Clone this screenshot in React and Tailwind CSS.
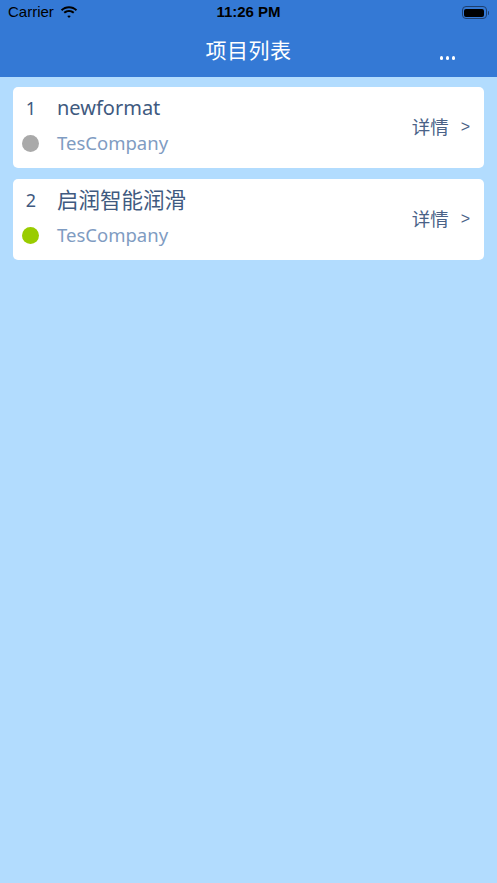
const projects = [
  { id: 1, name: 'newformat', company: 'TesCompany', dot: 'bg-[#a9a9a9]', size: 'text-[20px]' },
  { id: 2, name: '启润智能润滑', company: 'TesCompany', dot: 'bg-[#99cc00]', size: 'text-[21.5px]' },
]

const font = "font-['Noto_Sans','Noto_Sans_CJK_SC',sans-serif]"

const Wifi = () => (
  <svg width="18" height="13" viewBox="0 0 18 13" className="ml-[6px]">
    <path d="M9 2.2c2.6 0 5 1 6.8 2.7l1.3-1.4C14.9 1.4 12.1.2 9 .2S3.1 1.4.9 3.5l1.3 1.4C4 3.2 6.4 2.2 9 2.2z" fill="#000" />
    <path d="M9 5.9c1.6 0 3 .6 4.1 1.6l1.3-1.4C13 4.8 11.1 3.9 9 3.9S5 4.8 3.6 6.1l1.3 1.4C6 6.5 7.4 5.9 9 5.9z" fill="#000" />
    <path d="M9 9.4c.7 0 1.3.3 1.8.7L9 12 7.2 10.1c.5-.4 1.1-.7 1.8-.7z" fill="#000" />
  </svg>
)

const StatusBar = () => (
  <div className="relative h-[25px] flex items-center px-2 text-[15px] text-black font-['Liberation_Sans',sans-serif]">
    <span>Carrier</span>
    <Wifi />
    <span className="absolute left-1/2 -translate-x-1/2 font-bold">11:26 PM</span>
    <div className="ml-auto flex items-center">
      <div className="w-[25px] h-[13px] rounded-[4px] border border-[#1e3f6e] p-[1.5px]">
        <div className="w-full h-full rounded-[2px] bg-black" />
      </div>
      <div className="w-[1.5px] h-[4px] bg-[#1e3f6e] ml-[1px] rounded-r-sm" />
    </div>
  </div>
)

const App = () => {
  return (
    <div className={`min-h-[883px] bg-[#b2dcfe] ${font}`}>
      {/* Header */}
      <div className="bg-[#3479d5]">
        <StatusBar />
        <div className="relative h-[52px] flex items-center justify-center">
          <h1 className="text-white text-[21px] tracking-[0.5px]">项目列表</h1>
          <div className="absolute right-[42px] top-[31px] flex gap-[2.5px]">
            <span className="w-[3.5px] h-[3.5px] rounded-full bg-white" />
            <span className="w-[3.5px] h-[3.5px] rounded-full bg-white" />
            <span className="w-[3.5px] h-[3.5px] rounded-full bg-white" />
          </div>
        </div>
      </div>

      {/* List */}
      <div className="px-[13px] pt-[10px] flex flex-col gap-[11px]">
        {projects.map((p) => (
          <div key={p.id} className="bg-white rounded-[5px] h-[81px] flex items-center pr-[14px]">
            <div className="flex-1 self-stretch grid grid-cols-[36px_1fr] grid-rows-[30px_28px] gap-y-[6px] pt-[6px]">
              <span className="flex items-center justify-center text-[18px] text-[#3f5a80]">{p.id}</span>
              <span className={`flex items-center ml-[8px] ${p.size} text-[#3f5a80]`}>{p.name}</span>
              <span className="flex items-center justify-center pr-[2px]">
                <span className={`w-[17px] h-[17px] rounded-full ${p.dot}`} />
              </span>
              <span className="flex items-center ml-[8px] text-[18.5px] text-[#7f9cc2]">{p.company}</span>
            </div>
            <div className="flex items-center text-[#4a6287] mt-[-2px]">
              <span className="text-[18.5px]">详情</span>
              <span className="text-[16px] ml-[12px] font-['Liberation_Sans',sans-serif]">&gt;</span>
            </div>
          </div>
        ))}
      </div>
    </div>
  )
}

export default App
